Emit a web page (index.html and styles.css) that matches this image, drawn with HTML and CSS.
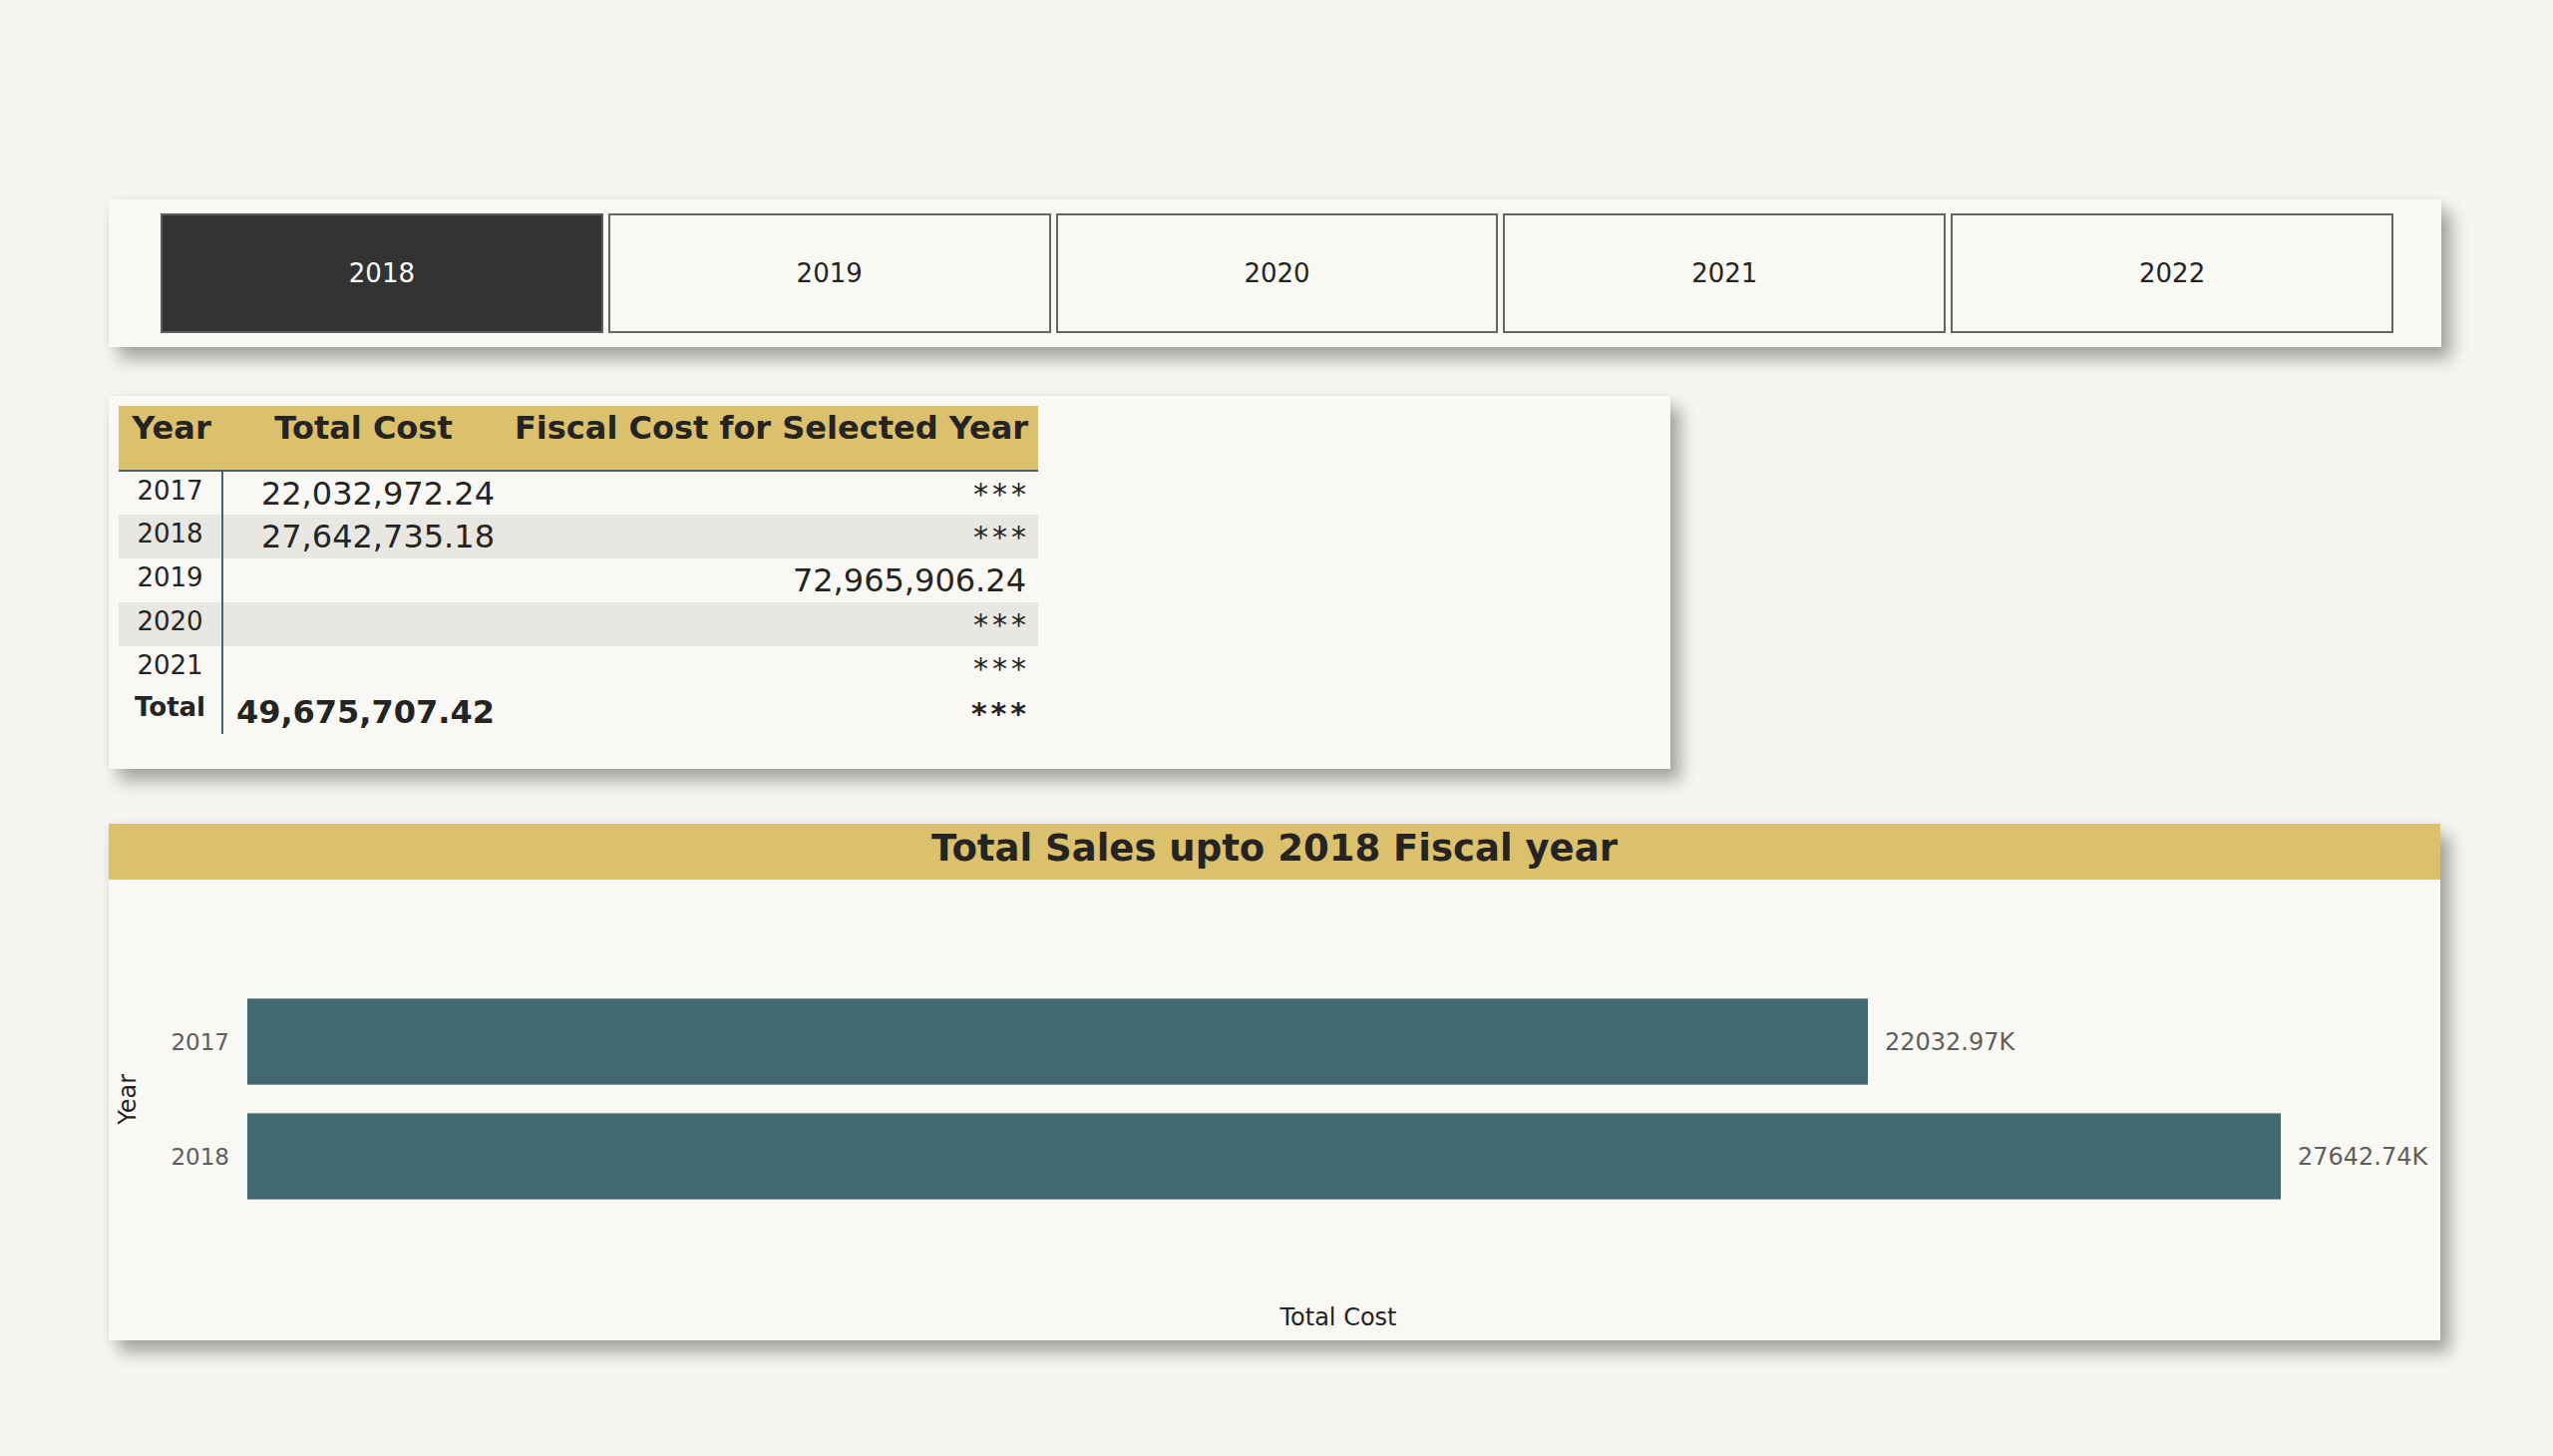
FILE: index.html
```html
<!DOCTYPE html>
<html lang="en">
<head>
<meta charset="utf-8">
<title>Fiscal Year Report</title>
<link rel="stylesheet" href="styles.css">
</head>
<body>
<main class="page">
  <section class="card slicer">
    <button class="year-btn selected">2018</button>
    <button class="year-btn">2019</button>
    <button class="year-btn">2020</button>
    <button class="year-btn">2021</button>
    <button class="year-btn">2022</button>
  </section>

  <section class="card table-card">
    <table class="matrix">
      <colgroup>
        <col class="c-year">
        <col class="c-total">
        <col class="c-fiscal">
      </colgroup>
      <thead>
        <tr>
          <th class="h-year">Year</th>
          <th class="h-center">Total Cost</th>
          <th class="h-center">Fiscal Cost for Selected Year</th>
        </tr>
      </thead>
      <tbody>
        <tr class="row">
          <td class="year">2017</td>
          <td class="num">22,032,972.24</td>
          <td class="num stars">***</td>
        </tr>
        <tr class="row alt">
          <td class="year">2018</td>
          <td class="num">27,642,735.18</td>
          <td class="num stars">***</td>
        </tr>
        <tr class="row">
          <td class="year">2019</td>
          <td class="num"></td>
          <td class="num">72,965,906.24</td>
        </tr>
        <tr class="row alt">
          <td class="year">2020</td>
          <td class="num"></td>
          <td class="num stars">***</td>
        </tr>
        <tr class="row">
          <td class="year">2021</td>
          <td class="num"></td>
          <td class="num stars">***</td>
        </tr>
        <tr class="row total">
          <td class="year">Total</td>
          <td class="num">49,675,707.42</td>
          <td class="num stars">***</td>
        </tr>
      </tbody>
    </table>
  </section>

  <section class="card chart-card">
    <h2 class="chart-title">Total Sales upto 2018 Fiscal year</h2>
    <div class="chart-body">
      <div class="plot">
        <div class="y-title"><span>Year</span></div>
        <div class="bars">
          <div class="bar-row">
            <span class="bar-label">2017</span>
            <span class="bar" style="width:1625px"></span>
            <span class="bar-value">22032.97K</span>
          </div>
          <div class="bar-row">
            <span class="bar-label">2018</span>
            <span class="bar" style="width:2039px"></span>
            <span class="bar-value">27642.74K</span>
          </div>
        </div>
      </div>
      <div class="x-title">Total Cost</div>
    </div>
  </section>
</main>
</body>
</html>
```

FILE: styles.css
```css
* { box-sizing: border-box; }

html, body {
  margin: 0;
  padding: 0;
  background: #f6f5f1;
  font-family: "DejaVu Sans", Verdana, sans-serif;
  color: #252423;
}

.page {
  padding: 200px 0 100px 109px;
  display: flex;
  flex-direction: column;
  align-items: flex-start;
}

.card {
  background: #f9f8f4;
  box-shadow: 10px 12px 16px rgba(0, 0, 0, 0.33), 0 0 8px rgba(0, 0, 0, 0.06);
}

/* ---------- slicer ---------- */
.slicer {
  width: 2339px;
  height: 148px;
  padding: 14px 48px 14px 52px;
  display: flex;
  gap: 5px;
}

.year-btn {
  flex: 1;
  height: 120px;
  border: 2px solid #646464;
  background: #f9f8f4;
  color: #252423;
  font-family: "DejaVu Sans", Verdana, sans-serif;
  font-size: 26px;
  padding: 0;
  margin: 0;
}

.year-btn.selected {
  background: #333333;
  border-color: #5c5c5c;
  color: #ffffff;
}

/* ---------- table ---------- */
.table-card {
  margin-top: 49px;
  width: 1566px;
  height: 374px;
  padding: 10px 0 0 10px;
}

.matrix {
  width: 922px;
  table-layout: fixed;
  border-collapse: collapse;
}

.c-year { width: 104px; }
.c-total { width: 283px; }
.c-fiscal { width: 535px; }

.matrix thead th {
  background: #dbc06e;
  font-size: 32px;
  font-weight: bold;
  line-height: 36px;
  height: 64px;
  padding: 4px 0 24px;
  vertical-align: top;
  text-align: center;
  white-space: nowrap;
  border-bottom: 2px solid #41666f;
}

.matrix thead th.h-year { padding-left: 2px; }

.row { height: 44px; }
.row.alt td { background: #e9e7e2; }

.row td {
  vertical-align: top;
  padding: 4px 10px 0 10px;
  white-space: nowrap;
}

.row td.year {
  font-size: 26px;
  line-height: 30px;
  text-align: center;
  border-right: 2px solid #41666f;
  padding-left: 0;
  padding-right: 0;
}

.row td.num {
  font-size: 32px;
  line-height: 36px;
  text-align: right;
}

.row td:last-child { padding-right: 12px; }

.row td.stars {
  letter-spacing: 4px;
  font-size: 30px;
  line-height: 30px;
  padding-top: 8px;
}

.row td.stars, .row td:last-child.stars { padding-right: 8px; }

.row.total td {
  font-weight: bold;
}

.row.total td.year {
  font-size: 26px;
  padding-top: 2px;
}

.row.total td.num { padding-top: 4px; }
.row.total td.stars { padding-top: 9px; }

/* ---------- chart ---------- */
.chart-card {
  margin-top: 55px;
  width: 2338px;
  height: 518px;
  display: flex;
  flex-direction: column;
}

.chart-title {
  margin: 0;
  height: 56px;
  background: #dbc06e;
  font-size: 37px;
  font-weight: bold;
  line-height: 43px;
  padding-top: 3px;
  text-align: center;
  color: #252423;
}

.chart-body {
  flex: 1;
  padding: 119px 11px 0 5px;
  display: flex;
  flex-direction: column;
}

.plot {
  display: flex;
  align-items: center;
}

.y-title {
  width: 28px;
  display: flex;
  justify-content: center;
}

.y-title span {
  writing-mode: vertical-rl;
  transform: rotate(180deg);
  font-size: 24px;
  line-height: 28px;
  color: #252423;
}

.bars {
  flex: 1;
  display: flex;
  flex-direction: column;
  gap: 28px;
}

.bar-row {
  display: flex;
  align-items: center;
  height: 87px;
}

.bar-label {
  width: 88px;
  margin-right: 18px;
  text-align: right;
  font-size: 23px;
  color: #605e5c;
}

.bar {
  height: 87px;
  background: #426870;
  box-shadow: inset 0 1px 0 #7f9ba1, inset 0 -1px 0 #7f9ba1;
}

.bar-value {
  margin-left: 17px;
  font-size: 24px;
  color: #605e5c;
  white-space: nowrap;
}

.x-title {
  margin-top: 104px;
  padding-left: 134px;
  text-align: center;
  font-size: 24px;
  line-height: 28px;
  color: #252423;
}
```
